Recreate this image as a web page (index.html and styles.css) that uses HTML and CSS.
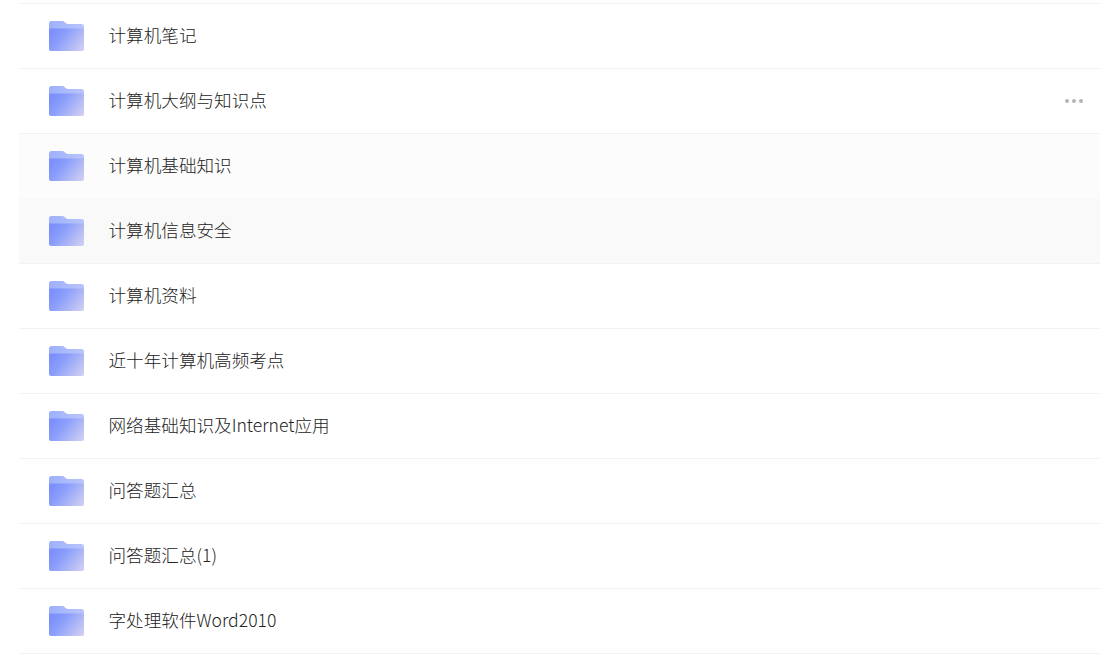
FILE: index.html
```html
<!DOCTYPE html>
<html lang="zh-CN">
<head>
<meta charset="utf-8">
<title>文件列表</title>
<link rel="stylesheet" href="styles.css">
</head>
<body>
<svg class="defs" width="0" height="0" aria-hidden="true">
  <defs>
    <linearGradient id="folderFront" x1="0" y1="0.3" x2="1" y2="0.8">
      <stop offset="0" stop-color="#7b8ffd"/>
      <stop offset="0.35" stop-color="#8c9ffb"/>
      <stop offset="1" stop-color="#cccdf2"/>
    </linearGradient>
    <linearGradient id="folderBack" x1="0" y1="0" x2="1" y2="0">
      <stop offset="0" stop-color="#9db0fb"/>
      <stop offset="1" stop-color="#b9c5fb"/>
    </linearGradient>
    <symbol id="folder" viewBox="0 0 35 30">
      <path fill="url(#folderBack)" d="M0 2.500A2.500 2.500 0 0 1 2.500 0H13C14.500 0 15.300.6 16.100 1.600 16.900 2.700 17.700 3 19 3H32.500A2.500 2.500 0 0 1 35 5.500V12H0Z"/>
      <path fill="url(#folderFront)" d="M0 7.500H35V28A2 2 0 0 1 33 30H2A2 2 0 0 1 0 28Z"/>
    </symbol>
  </defs>
</svg>
<ul class="list">
  <li class="row"><svg class="icon"><use href="#folder"/></svg><span class="name">计算机笔记</span></li>
  <li class="row"><svg class="icon"><use href="#folder"/></svg><span class="name">计算机大纲与知识点</span><span class="more"><i></i><i></i><i></i></span></li>
  <li class="row row-soft"><svg class="icon"><use href="#folder"/></svg><span class="name">计算机基础知识</span></li>
  <li class="row row-hover"><svg class="icon"><use href="#folder"/></svg><span class="name">计算机信息安全</span></li>
  <li class="row"><svg class="icon"><use href="#folder"/></svg><span class="name">计算机资料</span></li>
  <li class="row"><svg class="icon"><use href="#folder"/></svg><span class="name">近十年计算机高频考点</span></li>
  <li class="row"><svg class="icon"><use href="#folder"/></svg><span class="name">网络基础知识及Internet应用</span></li>
  <li class="row"><svg class="icon"><use href="#folder"/></svg><span class="name">问答题汇总</span></li>
  <li class="row"><svg class="icon"><use href="#folder"/></svg><span class="name">问答题汇总(1)</span></li>
  <li class="row"><svg class="icon"><use href="#folder"/></svg><span class="name">字处理软件Word2010</span></li>
</ul>
</body>
</html>
```
FILE: styles.css
```css
html, body {
  margin: 0;
  padding: 0;
  background: #fff;
  overflow: hidden;
}
body {
  height: 667px;
  padding-top: 3px;
  box-sizing: border-box;
  font-family: "Noto Sans CJK SC", "Noto Sans", sans-serif;
}
.defs {
  position: absolute;
}
.list {
  list-style: none;
  margin: 0 0 0 19px;
  padding: 0;
  border-top: 1px solid #f2f2f2;
}
.row {
  display: flex;
  align-items: center;
  height: 64px;
  padding-left: 30px;
  border-bottom: 1px solid #f2f2f2;
}
.row-soft {
  background: #fcfcfc;
  border-bottom-color: #fafafa;
}
.row-hover {
  background: #f9f9f9;
}
.icon {
  width: 35px;
  height: 30px;
  flex: none;
}
.name {
  margin-left: 24.5px;
  padding-bottom: 4px;
  font-size: 17.6px;
  font-weight: 300;
  color: #222;
}
.more {
  margin-left: auto;
  margin-right: 17px;
  display: flex;
  gap: 3px;
}
.more i {
  width: 4px;
  height: 4px;
  border-radius: 50%;
  background: #b4b4b4;
}
```
